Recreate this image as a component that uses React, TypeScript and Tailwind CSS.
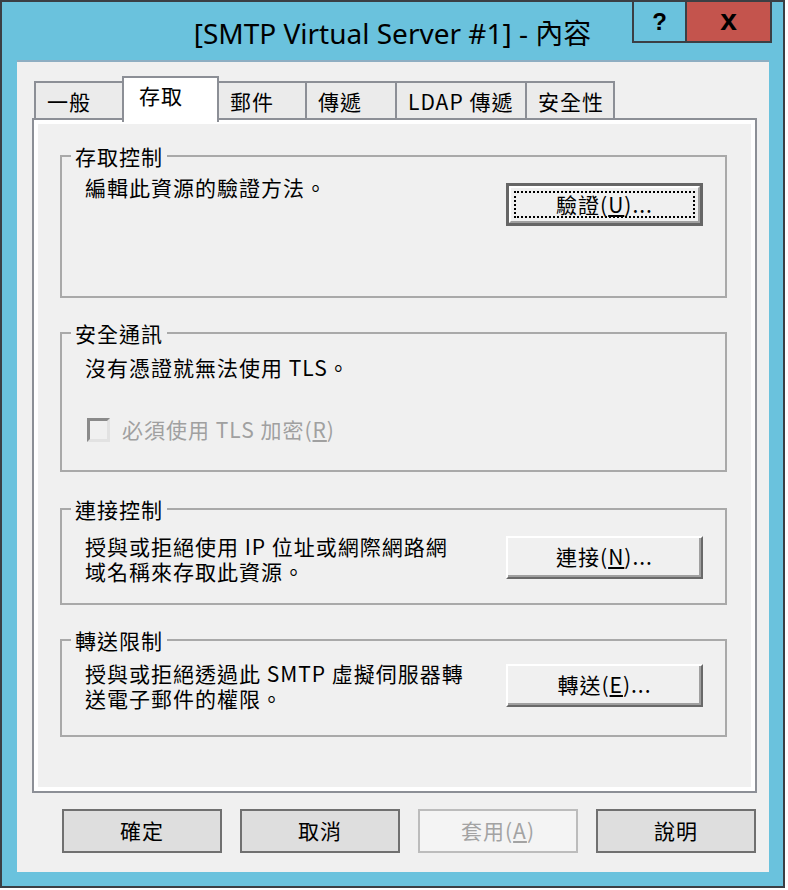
import React from "react";

interface TabProps {
  label: string;
  width: string;
  selected?: boolean;
}

const tabs: TabProps[] = [
  { label: "一般", width: "w-[90px]" },
  { label: "存取", width: "w-[97px]", selected: true },
  { label: "郵件", width: "w-[90px]" },
  { label: "傳遞", width: "w-[92px]" },
  { label: "LDAP 傳遞", width: "w-[132px]" },
  { label: "安全性", width: "w-[90px]" }
];

function Tab({ label, width, selected }: TabProps) {
  if (selected) {
    return (
      <div
        className={`${width} -ml-[2px] -mb-[4px] h-[46px] relative z-10 bg-white border-2 border-b-0 border-[#8c8f96] pl-[15px] pt-[3px] text-[21px] leading-[28px] tracking-[1px]`}
      >
        {label}
      </div>
    );
  }
  return (
    <div
      className={`${width} -ml-[2px] first:ml-0 h-[37px] bg-[#ebebeb] border-2 border-b-0 border-[#8c8f96] pl-[11px] pt-[4px] text-[21px] leading-[28px] tracking-[1px]`}
    >
      {label}
    </div>
  );
}

function Group({
  title,
  className,
  children
}: {
  title: string;
  className: string;
  children?: React.ReactNode;
}) {
  return (
    <fieldset className={`border-2 border-[#a9a9a9] ${className}`}>
      <legend className="ml-[9px] px-[4px] text-[21px] leading-[22px] tracking-[1px]">
        {title}
      </legend>
      {children}
    </fieldset>
  );
}

function ClassicButton({ children }: { children: React.ReactNode }) {
  return (
    <button className="w-[197px] h-[43px] shrink-0 bg-[#f0f0f0] border-2 border-t-white border-l-white border-r-[#696969] border-b-[#696969] shadow-[inset_-2px_-2px_0_#a0a0a0] text-[21px] leading-[25px] tracking-[1px] pb-[2px]">
      {children}
    </button>
  );
}

function DefaultButton({ children }: { children: React.ReactNode }) {
  return (
    <button className="w-[197px] h-[43px] shrink-0 border-[3px] border-[#666666] bg-[#f0f0f0] p-0">
      <div className="h-full border-2 border-t-white border-l-white border-r-[#a0a0a0] border-b-[#a0a0a0] p-[3px]">
        <div className="h-full border-2 border-dotted border-black flex items-center justify-center text-[21px] leading-[25px] tracking-[1px]">
          {children}
        </div>
      </div>
    </button>
  );
}

function FooterButton({
  children,
  disabled
}: {
  children: React.ReactNode;
  disabled?: boolean;
}) {
  return (
    <button
      className={
        disabled
          ? "w-[160px] h-[44px] border-2 border-[#bcbcbc] bg-[#f4f4f4] text-[#a3a3a3] text-[21px] tracking-[1px]"
          : "w-[160px] h-[44px] border-2 border-[#707070] bg-[#dedede] text-black text-[21px] tracking-[1px]"
      }
    >
      {children}
    </button>
  );
}

export default function App() {
  return (
    <div className="w-[788px] h-[890px] bg-white font-['Noto_Sans_CJK_TC','Noto_Sans_CJK_SC',sans-serif] text-black">
      <div className="w-[785px] h-[888px] border-2 border-[#3b3f44] bg-[#6ac2dd] flex flex-col">
        {/* title bar */}
        <div className="h-[58px] shrink-0 grid grid-cols-[1fr_auto_1fr]">
          <div />
          <div className="pt-[13px] text-[28px] leading-[36px] text-black font-['Noto_Sans','Noto_Sans_CJK_TC',sans-serif] whitespace-nowrap">
            [SMTP Virtual Server #1] - 內容
          </div>
          <div className="flex justify-end items-start pr-[11px]">
            <div className="w-[53px] h-[41px] border-l-2 border-b-2 border-[#3b3f44] flex items-center justify-center font-['Liberation_Sans',sans-serif] font-bold text-[24px] leading-none">
              ?
            </div>
            <div className="w-[87px] h-[41px] border-2 border-t-0 border-[#3b3f44] bg-[#c4544d] flex items-center justify-center font-['Liberation_Sans',sans-serif] font-bold text-[30px] leading-none pb-[4px]">
              x
            </div>
          </div>
        </div>

        {/* client area */}
        <div className="ml-[15px] mr-[14px] h-[812px] shrink-0 bg-[#f0f0f0] border-t-2 border-[#8eaec2] flex flex-col pl-[15px] pr-[12px] pt-[14px]">
          <div className="flex items-end pl-[2px]">
            {tabs.map((t) => (
              <Tab key={t.label} {...t} />
            ))}
          </div>

          <div className="h-[675px] border-2 border-[#8c8f96] bg-white p-[4px]">
            <div className="h-full bg-[#f0f0f0] flex flex-col pl-[22px] pr-[24px] pt-[21px]">
              <Group title="存取控制" className="h-[153px]">
                <div className="flex justify-between items-start pl-[23px] pr-[22px]">
                  <p className="mt-[8px] text-[21px] leading-[25px] tracking-[1px]">
                    編輯此資源的驗證方法。
                  </p>
                  <div className="mt-[16px]">
                    <DefaultButton>
                      驗證(<span className="underline">U</span>)...
                    </DefaultButton>
                  </div>
                </div>
              </Group>

              <Group title="安全通訊" className="h-[150px] mt-[24px]">
                <div className="pl-[23px]">
                  <p className="mt-[11px] text-[21px] leading-[25px] tracking-[1px]">
                    沒有憑證就無法使用 TLS。
                  </p>
                  <label className="mt-[37px] ml-[2px] flex items-center gap-[12px] text-[#a0a0a0] text-[21px] leading-[25px] tracking-[1px]">
                    <span className="w-[23px] h-[24px] border-[3px] border-t-[#8a8a8a] border-l-[#8a8a8a] border-r-[#e2e2e2] border-b-[#e2e2e2] bg-[#f0f0f0]" />
                    <span>
                      必須使用 TLS 加密(<span className="underline">R</span>)
                    </span>
                  </label>
                </div>
              </Group>

              <Group title="連接控制" className="h-[107px] mt-[26px]">
                <div className="flex justify-between items-start pl-[23px] pr-[22px]">
                  <p className="mt-[14px] text-[21px] leading-[25px] tracking-[1px]">
                    授與或拒絕使用 IP 位址或網際網路網
                    <br />
                    域名稱來存取此資源。
                  </p>
                  <div className="mt-[16px]">
                    <ClassicButton>
                      連接(<span className="underline">N</span>)...
                    </ClassicButton>
                  </div>
                </div>
              </Group>

              <Group title="轉送限制" className="h-[108px] mt-[24px]">
                <div className="flex justify-between items-start pl-[23px] pr-[22px]">
                  <p className="mt-[10px] text-[21px] leading-[25px] tracking-[1px]">
                    授與或拒絕透過此 SMTP 虛擬伺服器轉
                    <br />
                    送電子郵件的權限。
                  </p>
                  <div className="mt-[13px]">
                    <ClassicButton>
                      轉送(<span className="underline">E</span>)...
                    </ClassicButton>
                  </div>
                </div>
              </Group>
            </div>
          </div>

          <div className="flex gap-[18px] pl-[30px] mt-[16px]">
            <FooterButton>確定</FooterButton>
            <FooterButton>取消</FooterButton>
            <FooterButton disabled>
              套用(<span className="underline">A</span>)
            </FooterButton>
            <FooterButton>說明</FooterButton>
          </div>
        </div>
      </div>
    </div>
  );
}
